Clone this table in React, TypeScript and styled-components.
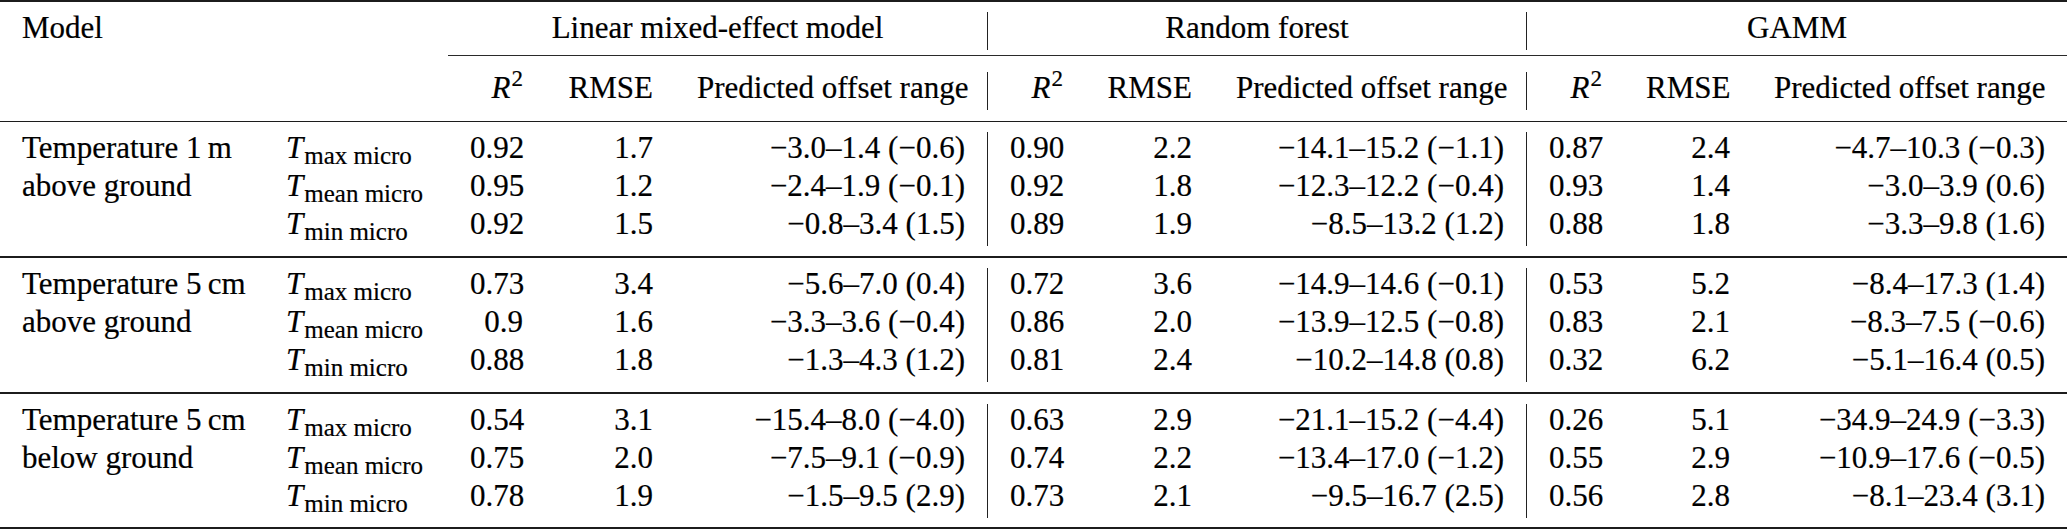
import React from "react";
import styled, { createGlobalStyle } from "styled-components";

const Global = createGlobalStyle`
  html, body { margin: 0; padding: 0; background: #ffffff; }
`;

const COLS = "264px 184px 97px 130px 313px 97px 129px 313px 97px 128px 315px";

const Table = styled.div`
  width: 2067px;
  display: flex;
  flex-direction: column;
  border-top: 2px solid #1c1c1c;
  border-bottom: 2px solid #1c1c1c;
  font-family: "Liberation Serif", "Times New Roman", serif;
  font-size: 31px;
  color: #000;
  -webkit-text-stroke: 0.2px #000;
`;

const Section = styled.div<{ $pt: number; $pb: number; $rule?: number }>`
  display: grid;
  grid-template-columns: ${COLS};
  padding-top: ${(p) => p.$pt}px;
  padding-bottom: ${(p) => p.$pb}px;
  border-bottom: ${(p) => (p.$rule ? `${p.$rule}px solid #1c1c1c` : "none")};
`;

const CmidRow = styled.div`
  display: grid;
  grid-template-columns: ${COLS};
  padding-top: 5px;
`;

const Cmid = styled.div`
  grid-column: 3 / -1;
  border-top: 1px solid #2a2a2a;
`;

const Cell = styled.div<{ $align?: "left" | "right" | "center"; $bar?: boolean; $span?: number }>`
  grid-column: span ${(p) => p.$span ?? 1};
  box-sizing: border-box;
  height: 38px;
  padding: 0 22px 7px;
  line-height: 31px;
  white-space: nowrap;
  text-align: ${(p) => p.$align ?? "right"};
  border-right: ${(p) => (p.$bar ? "1px solid #222" : "none")};
`;

const Ital = styled.i`
  font-style: italic;
`;

const Sup = styled.sup`
  font-size: 23px;
  line-height: 0;
  vertical-align: 12px;
  margin-left: 1px;
`;

const Sub = styled.sub`
  font-size: 25px;
  line-height: 0;
  vertical-align: -6px;
  margin-left: 1px;
`;

type Row = { v: string; vals: string[] };
type Group = { label: string[]; rows: Row[] };

const groups: Group[] = [
  {
    label: ["Temperature 1\u2009m", "above ground"],
    rows: [
      { v: "max micro", vals: ["0.92", "1.7", "−3.0–1.4 (−0.6)", "0.90", "2.2", "−14.1–15.2 (−1.1)", "0.87", "2.4", "−4.7–10.3 (−0.3)"] },
      { v: "mean micro", vals: ["0.95", "1.2", "−2.4–1.9 (−0.1)", "0.92", "1.8", "−12.3–12.2 (−0.4)", "0.93", "1.4", "−3.0–3.9 (0.6)"] },
      { v: "min micro", vals: ["0.92", "1.5", "−0.8–3.4 (1.5)", "0.89", "1.9", "−8.5–13.2 (1.2)", "0.88", "1.8", "−3.3–9.8 (1.6)"] },
    ],
  },
  {
    label: ["Temperature 5\u2009cm", "above ground"],
    rows: [
      { v: "max micro", vals: ["0.73", "3.4", "−5.6–7.0 (0.4)", "0.72", "3.6", "−14.9–14.6 (−0.1)", "0.53", "5.2", "−8.4–17.3 (1.4)"] },
      { v: "mean micro", vals: ["0.9", "1.6", "−3.3–3.6 (−0.4)", "0.86", "2.0", "−13.9–12.5 (−0.8)", "0.83", "2.1", "−8.3–7.5 (−0.6)"] },
      { v: "min micro", vals: ["0.88", "1.8", "−1.3–4.3 (1.2)", "0.81", "2.4", "−10.2–14.8 (0.8)", "0.32", "6.2", "−5.1–16.4 (0.5)"] },
    ],
  },
  {
    label: ["Temperature 5\u2009cm", "below ground"],
    rows: [
      { v: "max micro", vals: ["0.54", "3.1", "−15.4–8.0 (−4.0)", "0.63", "2.9", "−21.1–15.2 (−4.4)", "0.26", "5.1", "−34.9–24.9 (−3.3)"] },
      { v: "mean micro", vals: ["0.75", "2.0", "−7.5–9.1 (−0.9)", "0.74", "2.2", "−13.4–17.0 (−1.2)", "0.55", "2.9", "−10.9–17.6 (−0.5)"] },
      { v: "min micro", vals: ["0.78", "1.9", "−1.5–9.5 (2.9)", "0.73", "2.1", "−9.5–16.7 (2.5)", "0.56", "2.8", "−8.1–23.4 (3.1)"] },
    ],
  },
];

const models = ["Linear mixed-effect model", "Random forest", "GAMM"];

const R2 = () => (
  <>
    <Ital>R</Ital>
    <Sup>2</Sup>
  </>
);

export default function App() {
  return (
    <>
      <Global />
      <Table>
        <Section $pt={10} $pb={0}>
          <Cell $align="left">Model</Cell>
          <Cell $align="left" />
          {models.map((m, i) => (
            <Cell key={m} $span={3} $align="center" $bar={i < 2}>
              {m}
            </Cell>
          ))}
        </Section>
        <CmidRow>
          <Cmid />
        </CmidRow>
        <Section $pt={16} $pb={11} $rule={1}>
          <Cell $align="left" />
          <Cell $align="left" />
          {models.map((m, i) => (
            <React.Fragment key={m}>
              <Cell>
                <R2 />
              </Cell>
              <Cell>RMSE</Cell>
              <Cell $bar={i < 2}>Predicted offset range</Cell>
            </React.Fragment>
          ))}
        </Section>
        {groups.map((g, gi) => (
          <Section key={gi} $pt={10} $pb={gi < 2 ? 10 : 9} $rule={gi < 2 ? 2 : 0}>
            {g.rows.map((r, ri) => (
              <React.Fragment key={ri}>
                <Cell $align="left">{g.label[ri] ?? ""}</Cell>
                <Cell $align="left">
                  <Ital>T</Ital>
                  <Sub>{r.v}</Sub>
                </Cell>
                {r.vals.map((v, vi) => (
                  <Cell key={vi} $bar={vi === 2 || vi === 5}>
                    {v}
                  </Cell>
                ))}
              </React.Fragment>
            ))}
          </Section>
        ))}
      </Table>
    </>
  );
}
